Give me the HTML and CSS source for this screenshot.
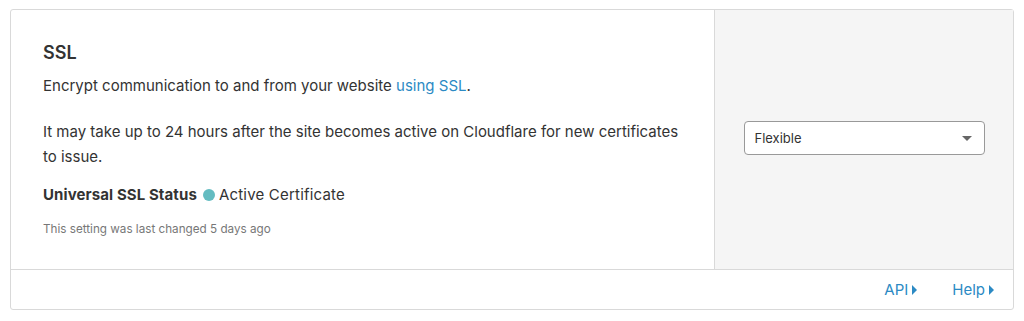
FILE: index.html
```html
<html lang="en">
  <head>
    <meta charset="UTF-8" />
    <meta name="viewport" content="width=device-width, initial-scale=1.0" />
    <title>SSL</title>
    <link rel="stylesheet" href="styles.css">
  </head>
  <body>
    <div class="card">
      <div class="card-body">
        <div class="content">
          <h2 class="title">SSL</h2>
          <p class="desc">Encrypt communication to and from your website <a href="#">using SSL</a>.</p>
          <p class="desc note">It may take up to 24 hours after the site becomes active on Cloudflare for new certificates to issue.</p>
          <div class="status">
            <strong>Universal SSL Status</strong>
            <span class="dot"></span>
            <span>Active Certificate</span>
          </div>
          <div class="changed">This setting was last changed 5 days ago</div>
        </div>
        <div class="control center">
          <div class="select">
            <span>Flexible</span>
            <span class="caret"></span>
          </div>
        </div>
      </div>
      <div class="card-footer">
        <a href="#" class="foot-link">API <span class="tri"></span></a>
        <a href="#" class="foot-link">Help <span class="tri"></span></a>
      </div>
    </div>
  </body>
</html>
```

FILE: styles.css
```css
*,
*::after,
*::before {
  margin: 0;
  padding: 0;
  box-sizing: border-box;
}

:root {
  --text: #333;
  --muted: #777;
  --link: #2c8ac4;
  --border: #d9d9d9;
  --panel-bg: #f5f5f5;
}

body {
  width: 100vw;
  height: 100vh;
  background: #fff;
  font-family: Inter, "Noto Sans", sans-serif;
  color: var(--text);
  padding: 9px 10px 0 10px;
}

.center {
  display: flex;
  justify-content: center;
  align-items: center;
}

.card {
  width: 1004px;
  height: 301px;
  border: 1px solid var(--border);
  border-radius: 3px;
  display: flex;
  flex-direction: column;
}

.card-body {
  display: flex;
  height: 260px;
  border-bottom: 1px solid var(--border);
}

.content {
  width: 704px;
  padding: 31px 32px 0 32px;
  border-right: 1px solid var(--border);
}

.title {
  font-size: 18px;
  font-weight: 600;
  line-height: 24px;
  margin-bottom: 8px;
}

.desc {
  font-size: 15px;
  line-height: 25px;
  margin-bottom: 21px;
}

.desc a {
  color: var(--link);
  text-decoration: none;
}

.note {
  margin-bottom: 13px;
}

.status {
  display: flex;
  align-items: center;
  font-size: 15px;
  line-height: 25px;
  letter-spacing: 0.2px;
}

.status strong {
  font-weight: 700;
  letter-spacing: 0.1px;
}

.dot {
  width: 12px;
  height: 12px;
  border-radius: 50%;
  background: #64bcc1;
  margin: 0 4px 0 6px;
}

.changed {
  font-size: 11.7px;
  color: var(--muted);
  margin-top: 15px;
}

.control {
  flex: 1;
  background: var(--panel-bg);
  padding-bottom: 3px;
}

.select {
  width: 241px;
  height: 34px;
  border: 1px solid #999;
  border-radius: 4px;
  background: #fff;
  display: flex;
  align-items: center;
  justify-content: space-between;
  padding: 0 12px 0 10px;
  font-size: 13px;
  color: #333;
}

.caret {
  width: 0;
  height: 0;
  border-left: 5px solid transparent;
  border-right: 5px solid transparent;
  border-top: 5px solid #666;
}

.card-footer {
  flex: 1;
  display: flex;
  justify-content: flex-end;
  align-items: center;
  gap: 35px;
  padding-right: 19px;
}

.foot-link {
  color: var(--link);
  text-decoration: none;
  font-size: 15px;
  display: flex;
  align-items: center;
  gap: 4px;
}

.tri {
  width: 0;
  height: 0;
  border-top: 5px solid transparent;
  border-bottom: 5px solid transparent;
  border-left: 5px solid var(--link);
}
```
